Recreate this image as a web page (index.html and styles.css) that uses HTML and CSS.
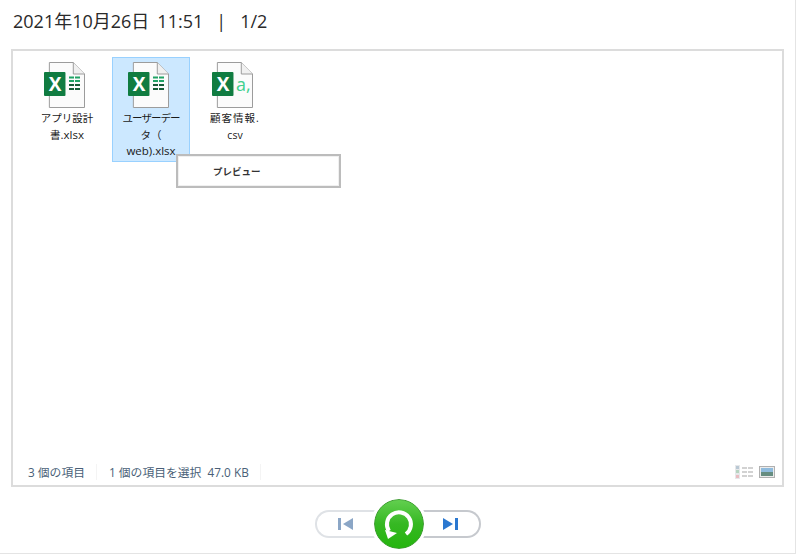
FILE: index.html
```html
<!DOCTYPE html>
<html lang="ja">
<head>
    <meta charset="UTF-8">
    <title>Preview</title>
    <link rel="stylesheet" href="styles.css">
</head>
<body>
    <svg class="defs" width="0" height="0">
        <symbol id="sheet" viewBox="0 0 42 46" preserveAspectRatio="none">
            <path d="M5.5 .5H30L41.5 12V45.5H5.5Z" fill="#fbfbfb" stroke="#9a9a9a"/>
            <path d="M30 .5V12H41.5" fill="#f0f0f0" stroke="#9a9a9a"/>
            <rect x="0" y="10" width="22" height="24" rx="1" fill="#107c41"/>
        </symbol>
    </svg>

    <header class="title">
        <span>2021年10月26日</span>
        <span>11:51</span>
        <span class="sep">|</span>
        <span>1/2</span>
    </header>

    <main class="panel">
        <div class="files">
            <div class="file">
                <svg class="icon" width="41" height="46">
                    <use href="#sheet"/>
                    <text class="icon-x" x="11" y="29">X</text>
                    <path d="M25 15.5h5M31 15.5h5M25 19h5M31 19h5" stroke="#21a366" stroke-width="2"/>
                    <path d="M25 23h5M31 23h5M25 27h5M31 27h5" stroke="#185c37" stroke-width="2"/>
                </svg>
                <span class="name"><span class="jp">アプリ設計<br>書</span>.xlsx</span>
            </div>
            <div class="file selected">
                <svg class="icon" width="41" height="46">
                    <use href="#sheet"/>
                    <text class="icon-x" x="11" y="29">X</text>
                    <path d="M25 15.5h5M31 15.5h5M25 19h5M31 19h5" stroke="#21a366" stroke-width="2"/>
                    <path d="M25 23h5M31 23h5M25 27h5M31 27h5" stroke="#185c37" stroke-width="2"/>
                </svg>
                <span class="name"><span class="jp tight">ユーザーデー</span><br><span class="jp">タ（</span><br>web).xlsx</span>
            </div>
            <div class="file">
                <svg class="icon" width="41" height="46">
                    <use href="#sheet"/>
                    <text class="icon-x" x="11" y="29">X</text>
                    <text class="icon-a" x="24" y="29">a,</text>
                </svg>
                <span class="name"><span class="jp wide">顧客情報.</span><br><span class="ext">csv</span></span>
            </div>
        </div>

        <div class="menu"><span class="menu-item">プレビュー</span></div>

        <footer class="status">
            <span class="count">3 個の項目</span>
            <span class="count">1 個の項目を選択&nbsp; 47.0 KB</span>
            <span class="views">
                <svg width="18" height="14" viewBox="0 0 18 14">
                    <rect x="0" y="0" width="5" height="14" fill="#e6e8ea"/>
                    <rect x="1" y="1" width="3" height="3" fill="#b9c8d4"/>
                    <rect x="1" y="5" width="3" height="3" fill="#b6d4c0"/>
                    <rect x="1" y="10" width="3" height="3" fill="#e8bcc1"/>
                    <path d="M7 3h5M13 3h5M7 7h5M13 7h5M7 11h5M13 11h5" stroke="#c4c4c4" stroke-width="1.5"/>
                </svg>
                <svg width="16" height="12" viewBox="0 0 16 12">
                    <rect x=".5" y=".5" width="15" height="11" fill="#ececec" stroke="#b0b0b0"/>
                    <rect x="2" y="2" width="12" height="4" fill="#8fbbdd"/>
                    <rect x="2" y="6" width="12" height="4" fill="#668d80"/>
                </svg>
            </span>
        </footer>
    </main>

    <nav class="controls">
        <button class="step prev" type="button">
            <svg width="16" height="14" viewBox="0 0 16 14"><path d="M0 1h3v12H0z" fill="#8ba6c6"/><path d="M15 1v12L5 7z" fill="#8ba6c6"/></svg>
        </button>
        <button class="play" type="button">
            <svg width="34" height="34" viewBox="0 0 34 34">
                <path d="M7 24A12 12 0 1 1 24 27" fill="none" stroke="#fff" stroke-width="4"/>
                <path d="M3 23L15 26L6 32Z" fill="#fff"/>
            </svg>
        </button>
        <button class="step next" type="button">
            <svg width="16" height="14" viewBox="0 0 16 14"><path d="M1 1v12L11 7z" fill="#2b78d0"/><path d="M13 1h3v12h-3z" fill="#2b78d0"/></svg>
        </button>
    </nav>
</body>
</html>
```

FILE: styles.css
```css
body {
    margin: 0;
    height: 554px;
    box-sizing: border-box;
    display: flex;
    flex-direction: column;
    overflow: hidden;
    font-family: "Open Sans", "Noto Sans CJK JP", sans-serif;
    color: #222;
    background: #fff;
    border-right: 1px solid #e4e4e4;
    border-bottom: 1px solid #e4e4e4;
}
.defs {
    position: absolute;
}
.title {
    height: 49px;
    box-sizing: border-box;
    padding: 8px 0 0 13px;
    display: flex;
    gap: 8px;
    font-size: 18px;
    line-height: 26px;
    color: #2a2a2a;
}
.sep {
    margin: 0 6px 0 5px;
}
.panel {
    position: relative;
    height: 438px;
    margin: 0 11px;
    box-sizing: border-box;
    display: flex;
    flex-direction: column;
    border: 2px solid #dcdcdc;
}
.files {
    flex: 1;
    display: flex;
    align-items: flex-start;
    gap: 6px;
    padding: 6px 0 0 15px;
}
.file {
    width: 78px;
    box-sizing: border-box;
    padding: 4px 4px 0;
    display: flex;
    flex-direction: column;
    align-items: center;
    border: 1px solid transparent;
}
.selected {
    height: 105px;
    background: #cce8ff;
    border-color: #99d1ff;
}
.icon {
    margin-left: -5px;
}
.icon-x {
    font-family: "Open Sans", sans-serif;
    font-size: 19px;
    font-weight: 700;
    fill: #fff;
    text-anchor: middle;
}
.icon-a {
    font-family: "Open Sans", sans-serif;
    font-size: 18px;
    font-weight: 400;
    fill: #41d08e;
}
.name {
    margin-top: 2px;
    width: 100%;
    font-size: 11.5px;
    line-height: 16.5px;
    text-align: center;
    color: #1a1a1a;
}
.jp {
    font-size: 10.5px;
}
.tight {
    letter-spacing: -1px;
}
.wide {
    letter-spacing: 1px;
}
.ext {
    font-size: 10.5px;
}
.menu {
    position: absolute;
    left: 163px;
    top: 103px;
    width: 165px;
    height: 34px;
    box-sizing: border-box;
    padding-left: 35px;
    display: flex;
    align-items: center;
    background: #fff;
    border: 2px solid #bcbcbc;
    box-shadow: inset 0 0 0 1px #f0f0f0;
}
.menu-item {
    font-size: 9.5px;
    font-weight: 700;
    color: #333;
}
.status {
    height: 26px;
    display: flex;
    align-items: center;
    padding: 0 7px 0 15px;
    font-size: 11.8px;
    color: #4a5f78;
}
.count {
    padding-right: 11px;
    margin-right: 12px;
    border-right: 1px solid #f4f4f4;
    line-height: 16px;
}
.views {
    margin-left: auto;
    display: flex;
    align-items: center;
    gap: 6px;
}
.controls {
    flex: 1;
    display: flex;
    align-items: center;
    justify-content: center;
    padding-top: 7px;
}
.step {
    width: 64px;
    height: 28px;
    padding: 0;
    display: flex;
    align-items: center;
    justify-content: center;
    background: #fff;
    border: 2px solid #dfe2e6;
}
.prev {
    border-radius: 14px 0 0 14px;
    border-right: none;
    margin-right: -5px;
    padding-right: 3px;
}
.next {
    width: 62px;
    border-radius: 0 14px 14px 0;
    border-left: none;
    border-color: #c6c9ce;
    margin-left: -5px;
    padding-left: 3px;
}
.play {
    position: relative;
    z-index: 1;
    width: 50px;
    height: 50px;
    padding: 0;
    display: flex;
    align-items: center;
    justify-content: center;
    border: 1px solid #3f9d33;
    border-radius: 50%;
    outline: 3px solid #fff;
    background: linear-gradient(180deg, #62cf4f 0%, #36b823 50%, #25b50e 100%);
}
```
